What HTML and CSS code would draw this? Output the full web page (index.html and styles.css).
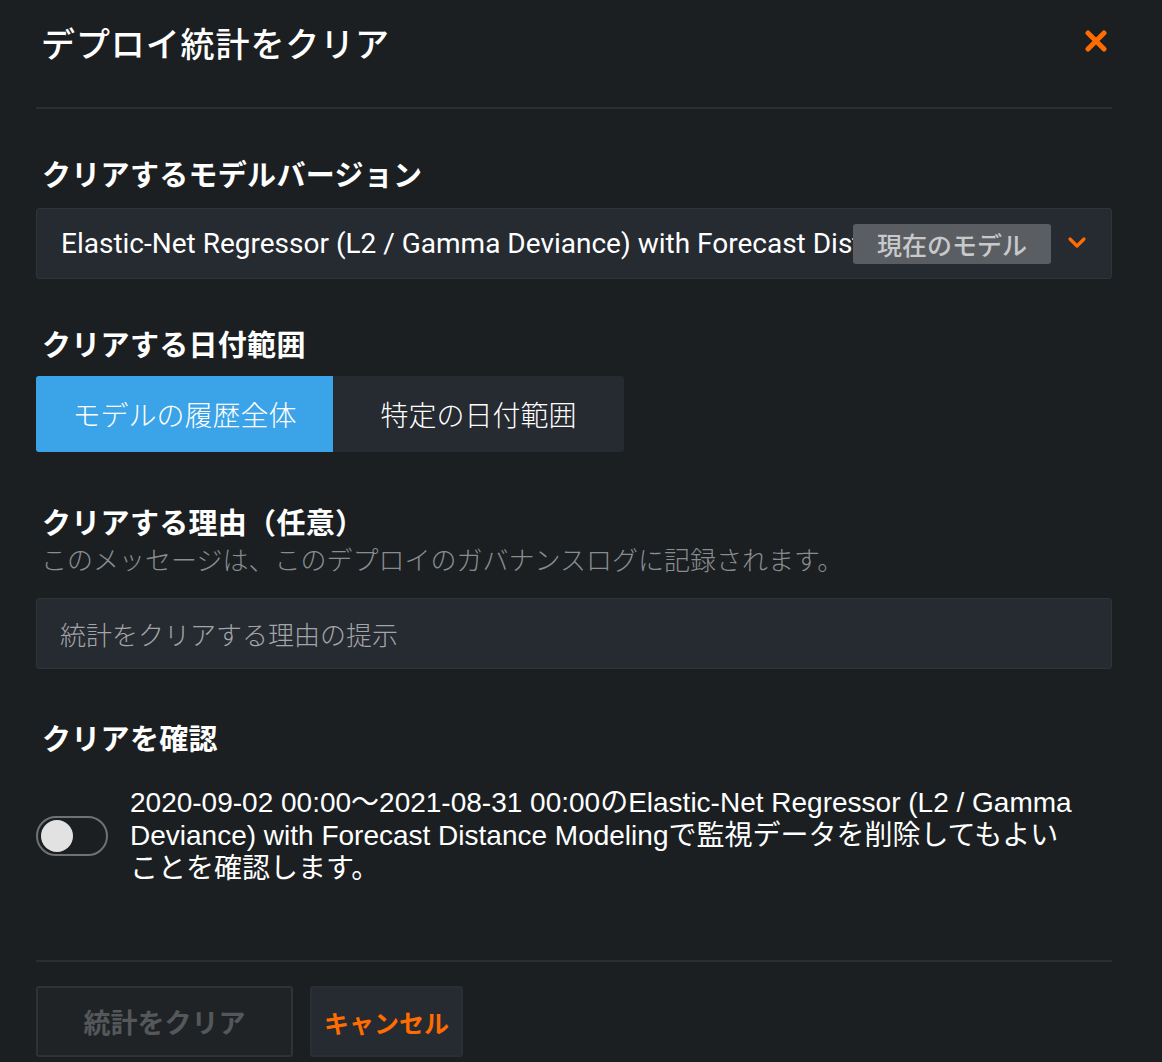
FILE: index.html
```html
<!DOCTYPE html>
<html lang="ja">
<head>
<meta charset="utf-8">
<link rel="stylesheet" href="styles.css">
</head>
<body>
<div class="dialog">
  <div class="header">
    <h1 class="title">デプロイ統計をクリア</h1>
    <button class="close" aria-label="close">
      <svg width="22" height="22" viewBox="0 0 22 22"><path d="M3 3L19 19M19 3L3 19" stroke="#ff6c00" stroke-width="5" stroke-linecap="round"/></svg>
    </button>
  </div>
  <div class="sep"></div>

  <div class="label first">クリアするモデルバージョン</div>
  <div class="select">
    <span class="select-text">Elastic-Net Regressor (L2 / Gamma Deviance) with Forecast Distance Modeling</span>
    <span class="badge">現在のモデル</span>
    <svg class="chev" width="20" height="14" viewBox="0 0 20 14"><path d="M3 3L10 10L17 3" fill="none" stroke="#ff6c00" stroke-width="3.2" stroke-linecap="round" stroke-linejoin="round"/></svg>
  </div>

  <div class="label second">クリアする日付範囲</div>
  <div class="segmented">
    <div class="seg active">モデルの履歴全体</div>
    <div class="seg">特定の日付範囲</div>
  </div>

  <div class="label third">クリアする理由（任意）</div>
  <div class="sub">このメッセージは、このデプロイのガバナンスログに記録されます。</div>
  <div class="input">統計をクリアする理由の提示</div>

  <div class="label fourth">クリアを確認</div>
  <div class="confirm">
    <div class="toggle"><div class="knob"></div></div>
    <div class="confirm-text">2020-09-02 00:00～2021-08-31 00:00のElastic-Net Regressor (L2 / Gamma Deviance) with Forecast Distance Modelingで監視データを削除してもよいことを確認します。</div>
  </div>

  <div class="sep bottom"></div>
  <div class="buttons">
    <button class="btn disabled">統計をクリア</button>
    <button class="btn cancel">キャンセル</button>
  </div>
</div>
</body>
</html>
```

FILE: styles.css
```css
html, body {
  margin: 0;
  padding: 0;
  background: #1b1f22;
}
body {
  font-family: "Noto Sans CJK JP", "Noto Sans", sans-serif;
  color: #ffffff;
}
.dialog {
  width: 1076px;
  margin-left: 36px;
  display: flex;
  flex-direction: column;
}
.header {
  height: 86px;
  display: flex;
  align-items: center;
  justify-content: space-between;
  margin-bottom: 21px;
}
.title {
  margin: 0 0 0 5px;
  font-size: 34px;
  font-weight: 500;
  line-height: 40px;
  letter-spacing: 0.9px;
}
.close {
  background: none;
  border: none;
  padding: 0;
  margin-right: 5px;
  display: flex;
  margin-top: -4px;
}
.sep {
  height: 2px;
  background: #2a2e33;
}
.label {
  font-size: 29px;
  font-weight: 700;
  line-height: 36px;
  margin: 46px 0 0 6px;
  letter-spacing: 0.3px;
}
.label.second { margin-top: 46px; }
.label.third { margin-top: 51px; }
.label.fourth { margin-top: 50px; }
.select {
  margin-top: 17px;
  height: 71px;
  box-sizing: border-box;
  background: #262a31;
  border: 1px solid #2f333a;
  border-radius: 3px;
  display: flex;
  align-items: center;
  padding: 0 24px 0 24px;
}
.select-text {
  font-family: Roboto, "Noto Sans", sans-serif;
  font-size: 28px;
  color: #ffffff;
  white-space: nowrap;
  overflow: hidden;
  flex: 1;
  min-width: 0;
}
.badge {
  flex: none;
  background: #5a5e62;
  color: #c8c9ca;
  font-size: 25px;
  font-weight: 500;
  height: 40px;
  line-height: 40px;
  width: 198px;
  box-sizing: border-box;
  text-align: center;
  border-radius: 3px;
  margin-right: 16px;
}
.chev { flex: none; margin-top: -2px; }
.segmented {
  margin-top: 15px;
  width: 588px;
  height: 76px;
  display: flex;
  background: #262a31;
  border-radius: 3px;
  overflow: hidden;
}
.seg {
  display: flex;
  align-items: center;
  justify-content: center;
  font-size: 28px;
  font-weight: 300;
  color: #ffffff;
  width: 291px;
}
.seg.active {
  width: 297px;
  background: #3ba3e8;
}
.sub {
  margin-top: 4px;
  font-size: 26px;
  line-height: 32px;
  color: #8a8d90;
  font-weight: 300;
  margin-left: 5px;
  white-space: nowrap;
}
.input {
  margin-top: 23px;
  height: 71px;
  box-sizing: border-box;
  background: #262a31;
  border: 1px solid #2f333a;
  border-radius: 3px;
  display: flex;
  align-items: center;
  padding-left: 23px;
  font-size: 26px;
  font-weight: 300;
  color: #a3a5a8;
}
.confirm {
  margin-top: 31px;
  display: flex;
  align-items: center;
}
.toggle {
  flex: none;
  width: 72px;
  height: 40px;
  box-sizing: border-box;
  border: 2px solid #6e7275;
  border-radius: 20px;
  display: flex;
  align-items: center;
  padding-left: 3px;
  margin-right: 22px;
}
.knob {
  width: 32px;
  height: 32px;
  border-radius: 50%;
  background: #e2e2e2;
}
.confirm-text {
  font-family: "Liberation Sans", Arial, "Noto Sans CJK JP", sans-serif;
  font-size: 28px;
  line-height: 33px;
  width: 948px;
  color: #ffffff;
}
.sep.bottom {
  margin-top: 75px;
}
.buttons {
  margin-top: 24px;
  display: flex;
  gap: 17px;
}
.btn {
  height: 71px;
  box-sizing: border-box;
  border-radius: 3px;
  font-family: "Noto Sans CJK JP", sans-serif;
  font-weight: 700;
  cursor: pointer;
}
.btn.disabled {
  width: 257px;
  background: #1f2326;
  border: 2px solid #2f3338;
  color: #55585b;
  font-size: 27px;
}
.btn.cancel {
  width: 153px;
  background: #262a31;
  border: 2px solid #2b2f35;
  color: #ff6c00;
  font-size: 25px;
}
```
